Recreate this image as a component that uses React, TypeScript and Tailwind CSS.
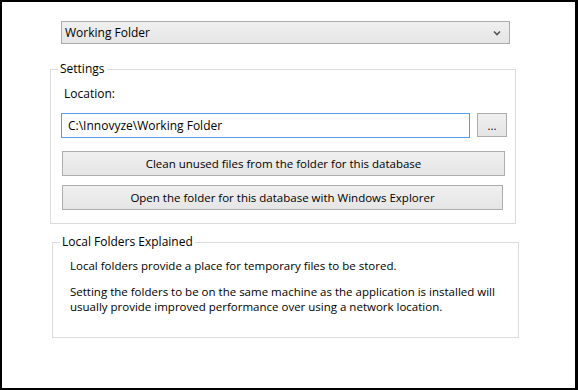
const font = { fontFamily: '"Open Sans", "Noto Sans", sans-serif' };

const ChevronDown = () => (
  <svg width="8" height="6" viewBox="0 0 8 6" className="shrink-0">
    <path d="M1 1.5 L4 4.5 L7 1.5" fill="none" stroke="#555" strokeWidth="1.6" />
  </svg>
);

const WinButton = ({ label, className }: { label: string; className: string }) => (
  <button
    type="button"
    className={`flex items-center justify-center border border-[#adadad] bg-gradient-to-b from-[#f0f0f0] to-[#e5e5e5] text-[11.5px] leading-[15px] text-black ${className}`}
  >
    {label}
  </button>
);

export default function App() {
  return (
    <div
      className="flex h-[390px] w-[578px] flex-col border-b-2 border-l-2 border-r-[3px] border-t-2 border-black bg-white text-[11.5px] leading-[15px] text-black"
      style={font}
    >
      <div className="ml-[59px] mt-[19px] flex h-[23px] w-[449px] items-center justify-between border border-[#acacac] bg-gradient-to-b from-[#f0f0f0] to-[#e5e5e5] pl-[3px] pr-[8px]">
        <span className="text-[12px]">Working Folder</span>
        <ChevronDown />
      </div>

      <fieldset className="ml-[48px] mt-[17px] flex h-[163px] w-[466px] flex-col border border-[#dcdcdc]">
        <legend className="ml-[7px] px-[2px] text-[12px] leading-[16px]">Settings</legend>
        <span className="ml-[13px] mt-[9px] text-[12px]">Location:</span>
        <div className="ml-[10px] mt-[12px] flex items-start">
          <div className="flex h-[25px] w-[409px] items-center border border-[#569de5] bg-white pl-[6px] text-[12px]">
            C:\Innovyze\Working Folder
          </div>
          <WinButton label="..." className="ml-[7px] h-[24px] w-[30px]" />
        </div>
        <WinButton label="Clean unused files from the folder for this database" className="ml-[11px] mt-[13px] h-[25px] w-[443px]" />
        <WinButton label="Open the folder for this database with Windows Explorer" className="ml-[11px] mt-[9px] h-[25px] w-[441px]" />
      </fieldset>

      <fieldset className="ml-[50px] mt-[10px] flex h-[104px] w-[467px] flex-col border border-[#dcdcdc]">
        <legend className="ml-[7px] px-[2px] text-[12px] leading-[16px]">Local Folders Explained</legend>
        <p className="ml-[17px] mt-[8px]">Local folders provide a place for temporary files to be stored.</p>
        <p className="ml-[17px] mt-[11px] whitespace-nowrap">
          Setting the folders to be on the same machine as the application is installed will
          <br />
          usually provide improved performance over using a network location.
        </p>
      </fieldset>
    </div>
  );
}
